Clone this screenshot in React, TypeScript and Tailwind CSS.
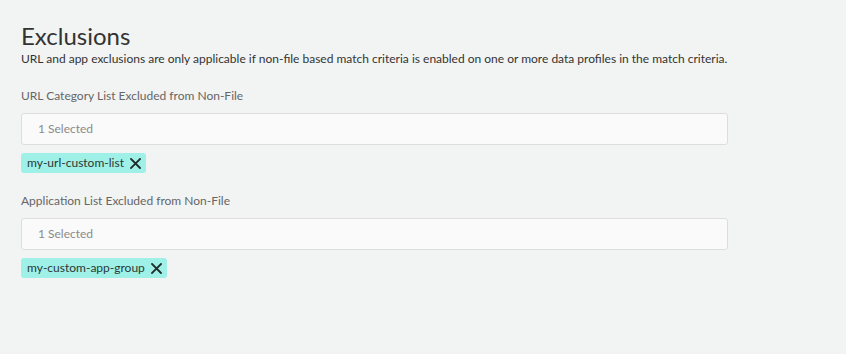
function Field({ label, tag }: { label: string; tag: string }) {
    return (
        <div className="flex flex-col">
            <div className="text-[12px] leading-[16px] text-[#666666]">{label}</div>
            <div className="mt-[9px] w-[707px] h-[32px] bg-[#fafafa] border border-[#dddddd] rounded-[3px] flex items-center pl-[16px] text-[12px] text-[#8a8a8a]">
                1 Selected
            </div>
            <div className="mt-[8px] self-start h-[20px] bg-[#9ff0e6] rounded-[3px] flex items-center pl-[6px] pr-[5px] gap-[6px] text-[12px] text-[#2a3837]">
                <span>{tag}</span>
                <svg width="11" height="11" viewBox="0 0 11 11" className="text-[#1f2c2b]">
                    <path d="M1 1L10 10M10 1L1 10" stroke="currentColor" strokeWidth="1.8" strokeLinecap="square" />
                </svg>
            </div>
        </div>
    );
}

export default function App() {
    return (
        <div className="w-[846px] h-[354px] bg-[#f2f3f3] px-[21px] pt-[20px]" style={{ fontFamily: 'Lato, "Open Sans", sans-serif' }}>
            <h1 className="text-[24px] leading-[32px] text-[#333333]">Exclusions</h1>
            <p className="text-[12px] leading-[14px] text-[#333333]">
                URL and app exclusions are only applicable if non-file based match criteria is enabled on one or more data profiles in the match criteria.
            </p>
            <div className="mt-[22px] flex flex-col gap-[20px]">
                <Field label="URL Category List Excluded from Non-File" tag="my-url-custom-list" />
                <Field label="Application List Excluded from Non-File" tag="my-custom-app-group" />
            </div>
        </div>
    );
}
